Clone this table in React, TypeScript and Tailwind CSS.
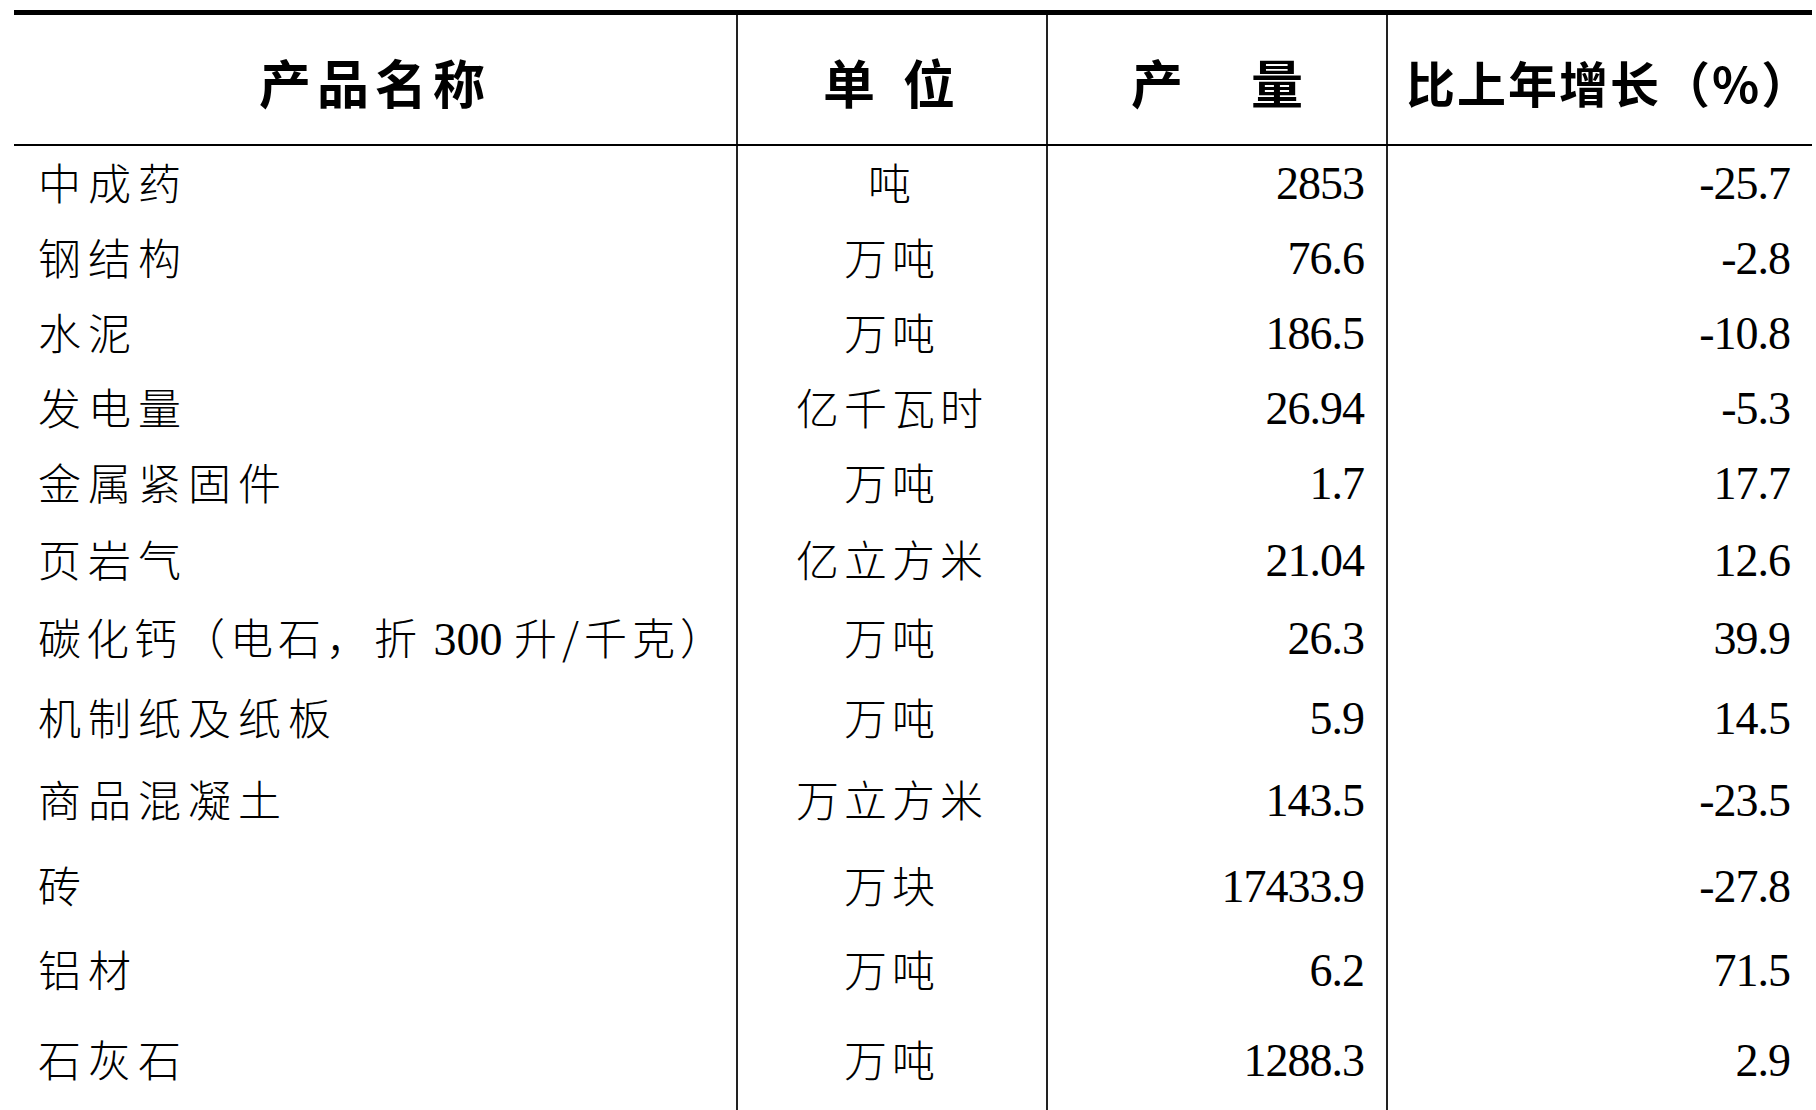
const rows = [
  { name: '中成药', unit: '吨', output: '2853', growth: '-25.7', h: 'h-[75px]' },
  { name: '钢结构', unit: '万吨', output: '76.6', growth: '-2.8', h: 'h-[75px]' },
  { name: '水泥', unit: '万吨', output: '186.5', growth: '-10.8', h: 'h-[75px]' },
  { name: '发电量', unit: '亿千瓦时', output: '26.94', growth: '-5.3', h: 'h-[75px]' },
  { name: '金属紧固件', unit: '万吨', output: '1.7', growth: '17.7', h: 'h-[77px]' },
  { name: '页岩气', unit: '亿立方米', output: '21.04', growth: '12.6', h: 'h-[78px]' },
  { name: 'carbide', unit: '万吨', output: '26.3', growth: '39.9', h: 'h-[80px]' },
  { name: '机制纸及纸板', unit: '万吨', output: '5.9', growth: '14.5', h: 'h-[82px]' },
  { name: '商品混凝土', unit: '万立方米', output: '143.5', growth: '-23.5', h: 'h-[86px]' },
  { name: '砖', unit: '万块', output: '17433.9', growth: '-27.8', h: 'h-[84px]' },
  { name: '铝材', unit: '万吨', output: '6.2', growth: '71.5', h: 'h-[90px]' },
  { name: '石灰石', unit: '万吨', output: '1288.3', growth: '2.9', h: 'h-[120px]' }
]

const cjk = "font-['Noto_Sans_CJK_SC',sans-serif]"
const serif = "font-['Liberation_Serif','Noto_Sans_CJK_SC',serif]"

function Name({ name }: { name: string }) {
  if (name === 'carbide') {
    return (
      <span className="tracking-[5px] whitespace-nowrap">
        碳化钙（电石，折<span className={`${serif} tracking-normal text-[46px]`}> 300 </span>升/千克）
      </span>
    )
  }
  return <span className="whitespace-nowrap">{name}</span>
}

export default function App() {
  return (
    <div className="bg-white w-[1816px] h-[1110px] overflow-hidden pt-[10px] pl-[14px]">
      <div className="w-[1798px] border-t-[5px] border-black">
        {/* header */}
        <div className={`grid grid-cols-[722px_310px_340px_426px] h-[131px] border-b-2 border-black ${cjk} font-bold text-[52px] text-black`}>
          <div className="flex items-center justify-center tracking-[6px] pt-1">产品名称</div>
          <div className="flex items-center justify-center border-l-2 border-[#222] pt-1 tracking-[6px]">单<span className="w-[22px]" />位</div>
          <div className="flex items-center justify-center border-l-2 border-[#222] pt-1">产<span className="w-[68px]" />量</div>
          <div className="flex items-center justify-center border-l-2 border-[#222] pt-1 pl-[18px] text-[49px] tracking-[2px]">比上年增长（%）</div>
        </div>

        {/* body */}
        {rows.map((r) => (
          <div key={r.name} className={`grid grid-cols-[722px_310px_340px_426px] ${r.h} text-black`}>
            <div className={`flex items-start pt-[3px] pl-[24px] ${cjk} font-light text-[43px] tracking-[7px]`}>
              <Name name={r.name} />
            </div>
            <div className={`flex items-start pt-[3px] justify-center border-l-2 border-[#222] ${cjk} font-light text-[43px] tracking-[5px]`}>
              {r.unit}
            </div>
            <div className={`flex items-start pt-[3px] justify-end pr-[22px] border-l-2 border-[#222] ${serif} text-[46px] tracking-[-1px]`}>
              {r.output}
            </div>
            <div className={`flex items-start pt-[3px] justify-end pr-[22px] border-l-2 border-[#222] ${serif} text-[46px] tracking-[-1px]`}>
              {r.growth}
            </div>
          </div>
        ))}
      </div>
    </div>
  )
}
